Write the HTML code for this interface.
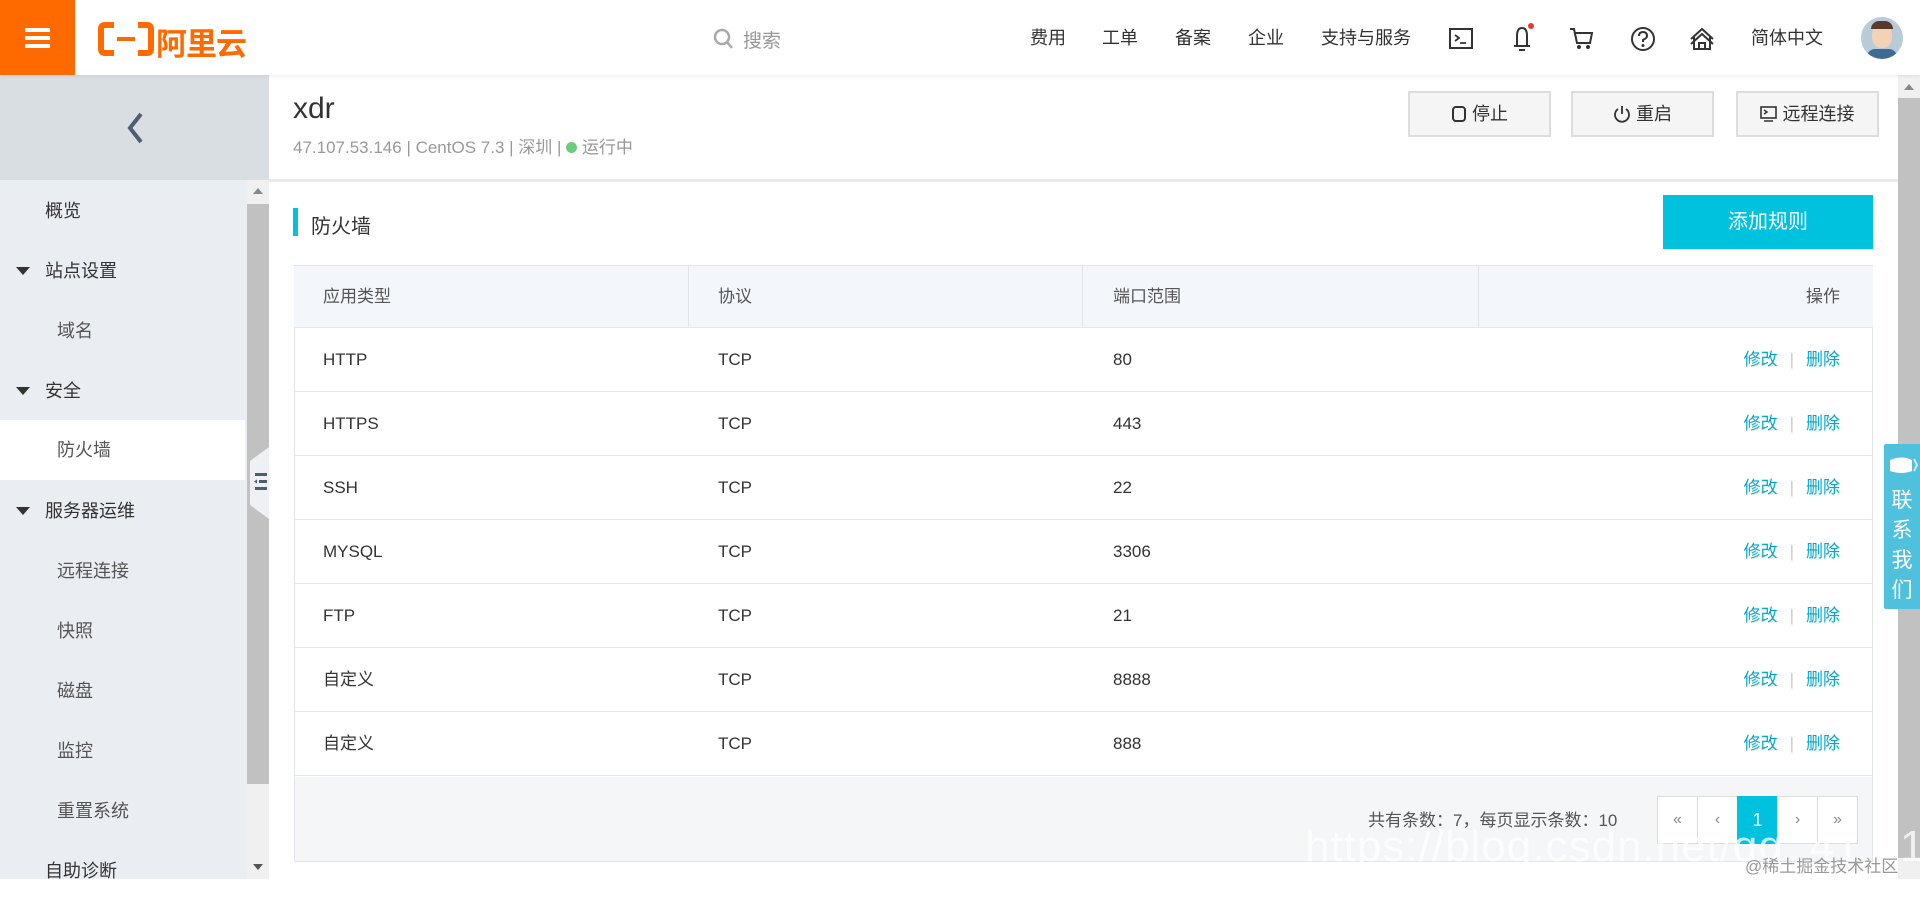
<!DOCTYPE html>
<html><head><meta charset="utf-8"><style>
*{margin:0;padding:0;box-sizing:border-box}
body{width:1920px;height:879px;overflow:hidden;background:#fff;font-family:"Liberation Sans","Noto Sans CJK SC",sans-serif;color:#333;position:relative}
.a{position:absolute}
.top{left:0;top:0;width:1920px;height:75px;background:#fff;box-shadow:0 1px 4px rgba(0,0,0,.08);z-index:2}
.nav{top:24px;font-size:18px;color:#333}
.side{left:0;top:75px;width:269px;height:804px;background:#eaedf1}
.mi{position:absolute;left:0;width:245px;height:60px;line-height:60px;font-size:18px;color:#333}
.mi.sub{padding-left:57px;color:#555}
.mi.top1{padding-left:45px}
.tri{position:absolute;left:16px;top:26px;width:0;height:0;border-left:7px solid transparent;border-right:7px solid transparent;border-top:8px solid #333}
.btn{top:91px;height:46px;width:143px;background:#f5f5f5;border:2px solid #ddd;font-size:18px;color:#333;text-align:center;line-height:42px}
.row{position:absolute;left:294px;width:1579px;height:64px;border-bottom:1px solid #e4e8ec;font-size:17px;line-height:64px}
.row span{position:absolute}
.act{right:33px;color:#00a8d0;word-spacing:0}
.act b{color:#ccc;font-weight:normal;margin:0 12px}
.pg{top:796px;width:41px;height:48px;border:1px solid #ddd;background:#fff;text-align:center;line-height:46px;color:#888;font-size:16px}
</style></head><body>
<div class="a top">
 <div class="a" style="left:0;top:0;width:75px;height:75px;background:#ff6a00">
  <div class="a" style="left:25px;top:28px;width:25px;height:4px;background:#fff"></div>
  <div class="a" style="left:25px;top:36px;width:25px;height:4px;background:#fff"></div>
  <div class="a" style="left:25px;top:44px;width:25px;height:4px;background:#fff"></div>
 </div>
 <svg class="a" style="left:98px;top:22px" width="56" height="34" viewBox="0 0 56 34"><path d="M16 3H7Q3 3 3 7V27Q3 31 7 31H16M40 3H49Q53 3 53 7V27Q53 31 49 31H40" stroke="#ff6a00" stroke-width="6" fill="none"/><rect x="19" y="15" width="18" height="4" fill="#ff6a00"/></svg>
 <div class="a" style="left:156px;top:19px;font-size:31px;font-weight:bold;color:#ff6a00;letter-spacing:-1px">阿里云</div>
 <svg class="a" style="left:713px;top:28px" width="20" height="22"><circle cx="9" cy="9" r="7" stroke="#aaa" stroke-width="2.5" fill="none"/><path d="M14 14L19 20" stroke="#aaa" stroke-width="2.5"/></svg>
 <div class="a" style="left:743px;top:26px;font-size:19px;color:#999">搜索</div>
 <div class="a nav" style="left:1030px">费用</div>
 <div class="a nav" style="left:1102px">工单</div>
 <div class="a nav" style="left:1175px">备案</div>
 <div class="a nav" style="left:1248px">企业</div>
 <div class="a nav" style="left:1321px">支持与服务</div>
 <svg class="a" style="left:1449px;top:28px" width="24" height="22"><rect x="1" y="1" width="22" height="19" stroke="#333" stroke-width="2" fill="none"/><path d="M6 7l4 3-4 3M11 15h6" stroke="#333" stroke-width="1.8" fill="none"/></svg>
 <svg class="a" style="left:1510px;top:22px" width="26" height="32"><path d="M7 24V14Q7 6 12 6Q17 6 17 14V24ZM4 24H20M9 28H15" stroke="#333" stroke-width="2" fill="none"/><circle cx="21" cy="4" r="3" fill="#e33"/></svg>
 <svg class="a" style="left:1569px;top:27px" width="26" height="24"><path d="M1 2H5L8 16H21L23 6H6" stroke="#333" stroke-width="2" fill="none"/><circle cx="10" cy="20" r="2" fill="#333"/><circle cx="19" cy="20" r="2" fill="#333"/></svg>
 <svg class="a" style="left:1630px;top:26px" width="26" height="26"><circle cx="13" cy="13" r="11" stroke="#333" stroke-width="2" fill="none"/><path d="M9 10Q9 6 13 6Q17 6 17 10Q17 12 13 14V16" stroke="#333" stroke-width="2" fill="none"/><circle cx="13" cy="19.5" r="1.5" fill="#333"/></svg>
 <svg class="a" style="left:1689px;top:26px" width="26" height="26"><path d="M2 13L13 3L24 13M5 11V23H21V11M2 18L13 8L24 18M10 23V17H16V23" stroke="#333" stroke-width="2" fill="none"/></svg>
 <div class="a nav" style="left:1751px">简体中文</div>
 <div class="a" style="left:1861px;top:17px;width:42px;height:42px;border-radius:50%;background:#b7cbd9;overflow:hidden">
  <div class="a" style="left:11px;top:7px;width:20px;height:24px;border-radius:45%;background:#f3d2b6"></div>
  <div class="a" style="left:10px;top:4px;width:22px;height:8px;border-radius:8px 8px 0 0;background:#5a3a2a"></div>
  <div class="a" style="left:6px;top:32px;width:30px;height:14px;border-radius:8px 8px 0 0;background:#3f6b93"></div>
 </div>
</div>
<div class="a side">
 <div class="a" style="left:0;top:0;width:269px;height:105px;background:#d9dee3"></div>
 <svg class="a" style="left:125px;top:36px" width="20" height="34"><path d="M16 3L5 17L16 31" stroke="#4f5d73" stroke-width="4" fill="none"/></svg>
 <div class="mi top1" style="top:106px">概览</div>
 <div class="mi top1" style="top:166px"><i class="tri"></i>站点设置</div>
 <div class="mi sub" style="top:226px">域名</div>
 <div class="mi top1" style="top:286px"><i class="tri"></i>安全</div>
 <div class="mi sub" style="top:345px;background:#fff">防火墙</div>
 <div class="mi top1" style="top:406px"><i class="tri"></i>服务器运维</div>
 <div class="mi sub" style="top:466px">远程连接</div>
 <div class="mi sub" style="top:526px">快照</div>
 <div class="mi sub" style="top:586px">磁盘</div>
 <div class="mi sub" style="top:646px">监控</div>
 <div class="mi sub" style="top:706px">重置系统</div>
 <div class="mi top1" style="top:766px">自助诊断</div>
 <div class="a" style="left:247px;top:105px;width:22px;height:699px;background:#f0f0f0"></div>
 <div class="a" style="left:247px;top:129px;width:22px;height:580px;background:#c1c1c1"></div>
 <div class="a" style="left:253px;top:113px;border-left:5px solid transparent;border-right:5px solid transparent;border-bottom:6px solid #888"></div>
 <div class="a" style="left:253px;top:789px;border-left:5px solid transparent;border-right:5px solid transparent;border-top:6px solid #555"></div>
 <svg class="a" style="left:250px;top:372px" width="19" height="72"><path d="M19 0V72L0 58V14Z" fill="#eef0f3"/><rect x="5" y="26" width="12" height="3" fill="#4f5d73"/><rect x="9" y="33" width="8" height="3" fill="#4f5d73"/><rect x="5" y="40" width="12" height="3" fill="#4f5d73"/><path d="M4 34.5l3-2v4z" fill="#4f5d73"/></svg>
</div>
<div class="a" style="left:293px;top:92px;font-size:30px;color:#333">xdr</div>
<div class="a" style="left:293px;top:133px;font-size:17px;color:#999">47.107.53.146 | CentOS 7.3 | 深圳 | <span style="display:inline-block;width:11px;height:11px;border-radius:50%;background:#6ccb7c"></span> 运行中</div>
<div class="a btn" style="left:1408px"><svg width="16" height="18" style="vertical-align:-3px"><rect x="2" y="2" width="12" height="14" rx="3" stroke="#333" stroke-width="2" fill="none"/></svg> 停止</div>
<div class="a btn" style="left:1571px"><svg width="18" height="18" style="vertical-align:-3px"><path d="M5 4A7 7 0 1 0 13 4M9 1V9" stroke="#333" stroke-width="1.8" fill="none"/></svg> 重启</div>
<div class="a btn" style="left:1736px"><svg width="17" height="18" style="vertical-align:-3px"><rect x="1" y="2" width="15" height="11" stroke="#333" stroke-width="1.6" fill="none"/><path d="M4 5l3 2-3 2M4 16h9" stroke="#333" stroke-width="1.5" fill="none"/></svg> 远程连接</div>
<div class="a" style="left:269px;top:179px;width:1629px;height:3px;background:#e8eaed"></div>
<div class="a" style="left:1898px;top:75px;width:22px;height:804px;background:#f0f0f0"></div>
<div class="a" style="left:1898px;top:98px;width:22px;height:760px;background:#c1c1c1"></div>
<div class="a" style="left:1904px;top:84px;border-left:5px solid transparent;border-right:5px solid transparent;border-bottom:6px solid #888"></div>
<div class="a" style="left:293px;top:208px;width:5px;height:28px;background:#00c1de"></div>
<div class="a" style="left:311px;top:210px;font-size:20px;color:#333">防火墙</div>
<div class="a" style="left:1663px;top:195px;width:210px;height:54px;background:#00c1de;color:#fff;font-size:20px;text-align:center;line-height:54px">添加规则</div>
<div class="a" style="left:294px;top:265px;width:1579px;height:597px;border:1px solid #e1e5ea"></div>
<div class="row" style="top:266px;height:62px;line-height:62px;background:#f3f7fb;color:#555">
 <span style="left:29px">应用类型</span><span style="left:424px">协议</span><span style="left:819px">端口范围</span><span style="right:33px">操作</span>
 <i class="a" style="left:394px;top:0;width:1px;height:62px;background:#e1e5ea"></i><i class="a" style="left:788px;top:0;width:1px;height:62px;background:#e1e5ea"></i><i class="a" style="left:1184px;top:0;width:1px;height:62px;background:#e1e5ea"></i>
</div>
<div class="row" style="top:328px"><span style="left:29px">HTTP</span><span style="left:424px">TCP</span><span style="left:819px">80</span><span class="act">修改<b>|</b>删除</span></div>
<div class="row" style="top:392px"><span style="left:29px">HTTPS</span><span style="left:424px">TCP</span><span style="left:819px">443</span><span class="act">修改<b>|</b>删除</span></div>
<div class="row" style="top:456px"><span style="left:29px">SSH</span><span style="left:424px">TCP</span><span style="left:819px">22</span><span class="act">修改<b>|</b>删除</span></div>
<div class="row" style="top:520px"><span style="left:29px">MYSQL</span><span style="left:424px">TCP</span><span style="left:819px">3306</span><span class="act">修改<b>|</b>删除</span></div>
<div class="row" style="top:584px"><span style="left:29px">FTP</span><span style="left:424px">TCP</span><span style="left:819px">21</span><span class="act">修改<b>|</b>删除</span></div>
<div class="row" style="top:648px"><span style="left:29px">自定义</span><span style="left:424px">TCP</span><span style="left:819px">8888</span><span class="act">修改<b>|</b>删除</span></div>
<div class="row" style="top:712px"><span style="left:29px">自定义</span><span style="left:424px">TCP</span><span style="left:819px">888</span><span class="act">修改<b>|</b>删除</span></div>
<div class="a" style="left:295px;top:777px;width:1577px;height:84px;background:#f4f6f8"></div>
<div class="a" style="left:1368px;top:806px;font-size:17px;color:#555">共有条数：7，每页显示条数：10</div>
<div class="a pg" style="left:1657px">«</div>
<div class="a pg" style="left:1697px">‹</div>
<div class="a pg" style="left:1737px;background:#00c1de;border-color:#00c1de;color:#fff;font-size:18px">1</div>
<div class="a pg" style="left:1777px">›</div>
<div class="a pg" style="left:1817px">»</div>
<div class="a" style="left:1305px;top:822px;font-size:44px;color:rgba(255,255,255,.75);white-space:nowrap;letter-spacing:1px">https://blog.csdn.net/qq_41...1</div>
<div class="a" style="left:1745px;top:852px;font-size:17px;color:#999;white-space:nowrap">@稀土掘金技术社区</div>
<div class="a" style="left:1884px;top:444px;width:36px;height:165px;background:#4fc1dc;color:#fff;font-size:21px;text-align:center;line-height:30px;padding-top:42px;border-radius:2px 0 0 2px">联<br>系<br>我<br>们</div>
<svg class="a" style="left:1888px;top:455px" width="30" height="22"><path d="M2 5Q14 0 24 5V16Q14 20 2 16Z" fill="#fff"/><path d="M26 4l3 6-3 6" stroke="#cfe9f0" stroke-width="2" fill="none"/></svg>
</body></html>
